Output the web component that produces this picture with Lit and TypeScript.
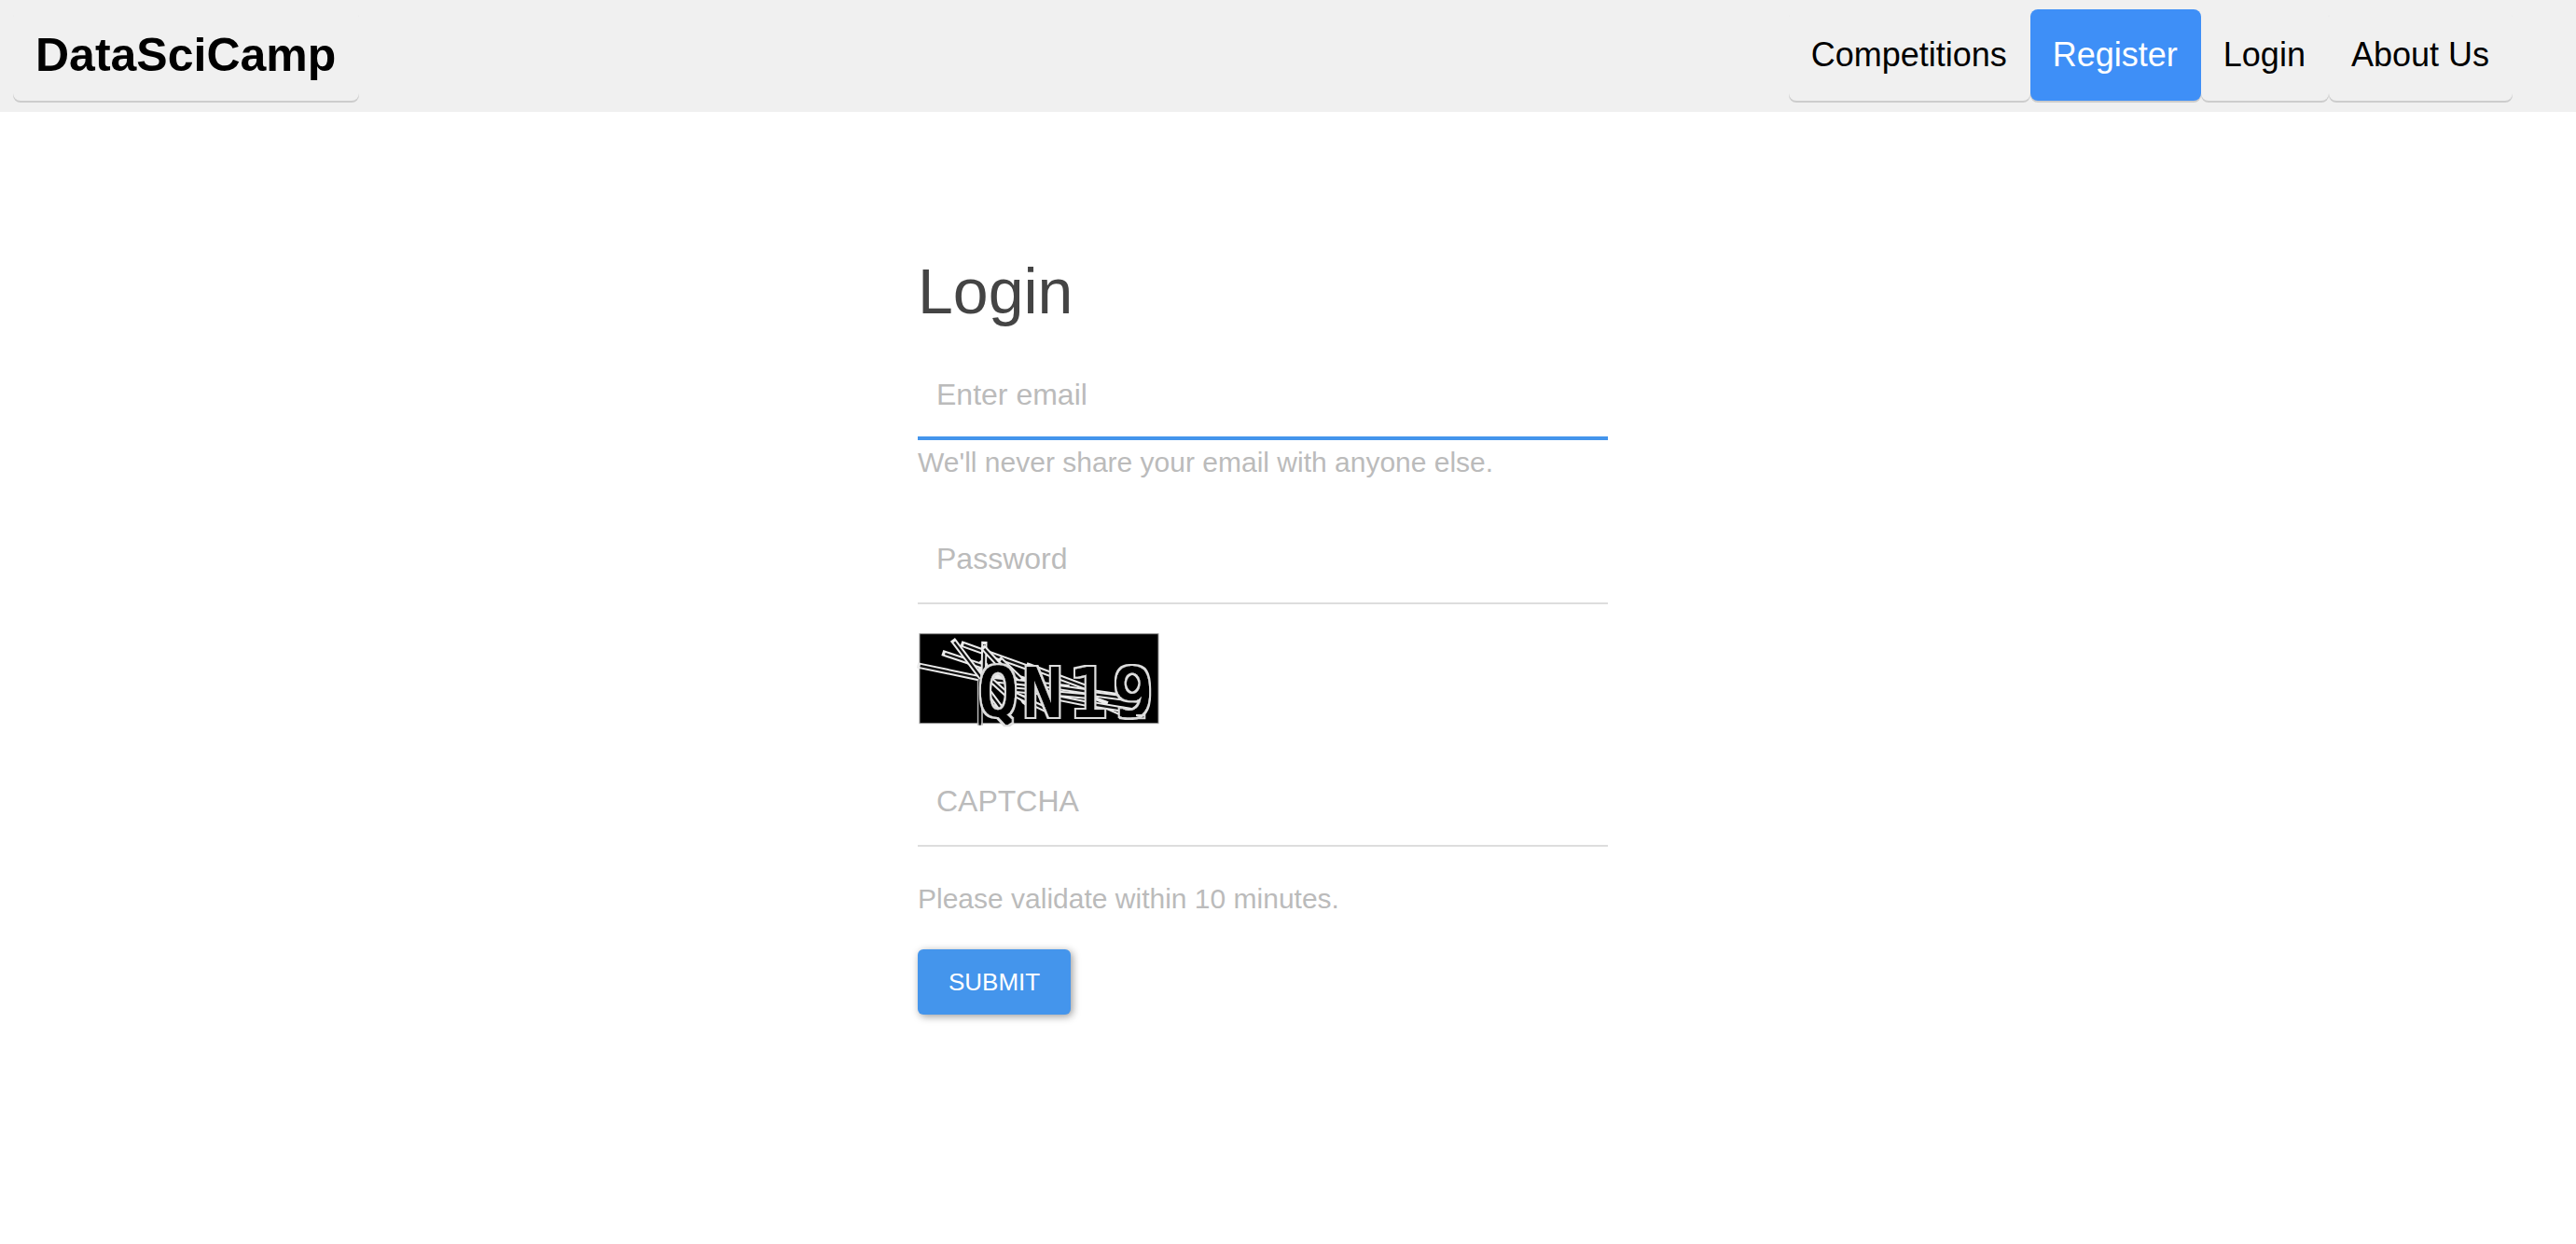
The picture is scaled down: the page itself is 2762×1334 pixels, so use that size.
import { LitElement, html, css, svg } from "lit";
import { customElement } from "lit/decorators.js";

/** Noise strokes of the captcha: x1, y1, x2, y2. */
const LINES = [
  [50, 147, 246, 188],
  [130, 108, 262, 152],
  [160, 70, 246, 184],
  [190, 79, 400, 154],
  [256, 78, 254, 180],
  [256, 92, 300, 140],
  [400, 148, 600, 222],
  [310, 130, 372, 190],
  [262, 190, 400, 204],
  [270, 230, 322, 300],
  [264, 180, 330, 240],
  [350, 198, 520, 216],
  [350, 224, 600, 246],
  [356, 240, 480, 300],
  [440, 240, 580, 268],
  [480, 214, 700, 246],
  [600, 256, 700, 300],
  [610, 238, 760, 258],
  [600, 270, 720, 290],
];
const GLYPHS: [string, number, number][] = [
  ["Q", 300, 306],
  ["N", 444, 310],
  ["1", 590, 310],
  ["9", 734, 310],
];

@customElement("captcha-image")
export class CaptchaImage extends LitElement {
  static styles = css`
    :host {
      display: block;
    }
    .image {
      display: block;
      overflow: visible;
      width: 260px;
      height: 100px;
    }
    .glyph {
      font: 212px "DejaVu Sans Mono", monospace;
      text-anchor: middle;
    }
    .outer {
      stroke: #ececec;
      stroke-width: 19px;
      stroke-linecap: square;
    }
    .inner {
      stroke: #111;
      stroke-width: 7px;
    }
  `;

  render() {
    return html`
      <svg class="image" viewBox="42 39 780 300" role="img" aria-label="CAPTCHA">
        <defs>
          <filter id="thicken" x="-10%" y="-10%" width="120%" height="120%">
            <feMorphology in="SourceAlpha" operator="dilate" radius="3" result="core"></feMorphology>
            <feMorphology in="SourceAlpha" operator="dilate" radius="9" result="edge"></feMorphology>
            <feFlood flood-color="#dddddd"></feFlood>
            <feComposite in2="edge" operator="in" result="rim"></feComposite>
            <feMerge>
              <feMergeNode in="rim"></feMergeNode>
              <feMergeNode in="core"></feMergeNode>
            </feMerge>
          </filter>
        </defs>
        <rect x="48" y="44" width="768" height="288" fill="#000" stroke="#999" stroke-width="3"></rect>
        <path
          d="M232 140l22 -18 14 20-22 44zM354 172l44 14v14l-44-4zM356 232l42 14v36l-20-14zM276 178l20-8 24 16-20 4zM290 270l30 26-14 6-24-22zM606 244l50 18-14 26-36-18zM422 262l40 18-4 12z"
          fill="#eee"
        ></path>
        ${LINES.map(
          ([a, b, c, d]) => svg`
            <line class="outer" x1=${a} y1=${b} x2=${c} y2=${d}></line>
            <line class="inner" x1=${a} y1=${b} x2=${c} y2=${d}></line>`
        )}
        <path d="M236 190V338M249 270V338" stroke="#bbb" stroke-width="5"></path>
        <path d="M242 190V338" stroke="#000" stroke-width="7"></path>
        ${GLYPHS.map(
          ([c, x, y]) => svg`<text class="glyph" x=${x} y=${y} filter="url(#thicken)">${c}</text>`
        )}
        <path d="M690 316H772v-10H744" fill="none" stroke="#ddd" stroke-width="6"></path>
      </svg>
    `;
  }
}

@customElement("app-root")
export class AppRoot extends LitElement {
  static styles = css`
    :host {
      display: block;
      min-height: 100vh;
      background: #fff;
      color: #444;
      font-family: "Liberation Sans", Arial, sans-serif;
    }
    * {
      box-sizing: border-box;
    }
    .header {
      display: flex;
      justify-content: space-between;
      padding: 10px 68px 12px 14px;
      background: #f0f0f0;
    }
    .nav {
      display: flex;
    }
    .link {
      display: flex;
      align-items: center;
      height: 98px;
      padding: 0 25px 0 24px;
      border-radius: 8px;
      box-shadow: 0 2px 0 #ccc;
      color: #000;
      font-size: 36px;
      line-height: 50px;
      text-decoration: none;
    }
    .brand {
      font-size: 50px;
      font-weight: bold;
    }
    .active {
      background: #3e8ff7;
      color: #fff;
    }
    .main {
      display: flex;
      justify-content: center;
      padding: 154px 54px 60px 0;
    }
    .form {
      display: flex;
      flex-direction: column;
      align-items: flex-start;
      width: 100%;
      max-width: 740px;
    }
    .title {
      margin: 0 0 24px;
      font-size: 68px;
      font-weight: normal;
      line-height: 76px;
    }
    .input {
      width: 100%;
      height: 98px;
      padding: 0 20px;
      border: 0;
      outline: 0;
      background: transparent;
      box-shadow: inset 0 -2px 0 #ddd;
      color: #666;
      font: inherit;
      font-size: 32px;
    }
    .input::placeholder {
      color: #bbb;
      opacity: 1;
    }
    .current,
    .input:focus {
      box-shadow: inset 0 -4px 0 #4495ec;
    }
    .hint {
      margin: 4px 0 34px;
      color: #bbb;
      font-size: 30px;
      line-height: 40px;
    }
    .captcha {
      margin: 30px 0 32px;
    }
    .note {
      margin-top: 36px;
    }
    .submit {
      height: 70px;
      padding: 0 33px;
      border: 0;
      border-radius: 6px;
      background: #4495ec;
      box-shadow: 2px 2px 8px rgba(0, 0, 0, 0.4);
      color: #fff;
      font: inherit;
      font-size: 26px;
      text-transform: uppercase;
    }
  `;

  render() {
    return html`
      <header class="header">
        <a class="link brand" href="#">DataSciCamp</a>
        <nav class="nav">
          <a class="link" href="#competitions">Competitions</a>
          <a class="link active" href="#register">Register</a>
          <a class="link" href="#login">Login</a>
          <a class="link" href="#about">About Us</a>
        </nav>
      </header>
      <main class="main">
        <form class="form" @submit=${(e: Event) => e.preventDefault()}>
          <h1 class="title">Login</h1>
          <input class="input current" type="email" placeholder="Enter email" aria-label="Enter email" aria-describedby="email-hint" />
          <p class="hint" id="email-hint">We'll never share your email with anyone else.</p>
          <input class="input" type="password" placeholder="Password" aria-label="Password" />
          <captcha-image class="captcha"></captcha-image>
          <input class="input" type="text" placeholder="CAPTCHA" aria-label="CAPTCHA" aria-describedby="captcha-hint" />
          <p class="hint note" id="captcha-hint">Please validate within 10 minutes.</p>
          <button class="submit" type="submit">Submit</button>
        </form>
      </main>
    `;
  }
}
